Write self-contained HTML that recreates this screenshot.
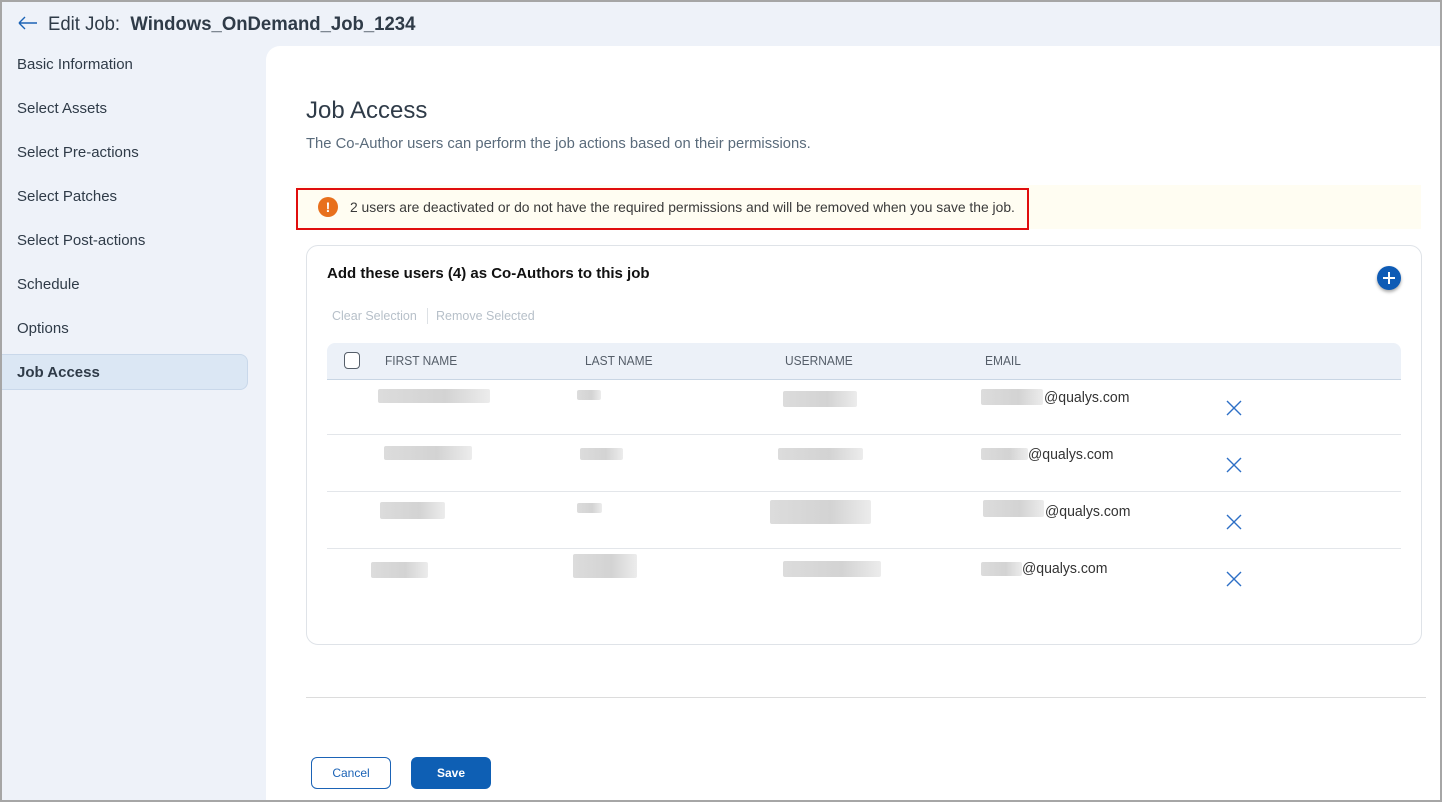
<!DOCTYPE html>
<html><head><meta charset="utf-8"><style>
*{box-sizing:border-box;margin:0;padding:0}
body{width:1442px;height:802px;overflow:hidden;font-family:"Liberation Sans",sans-serif;background:#eef2f9;position:relative;color:#333}
.frame{position:absolute;left:0;top:0;width:1442px;height:802px;border:2px solid #a6a6a6;pointer-events:none;z-index:10}
.a{position:absolute}
.nav{position:absolute;left:17px;font-size:15px;color:#2f3b48}
.panel{position:absolute;left:266px;top:46px;width:1174px;height:754px;background:#fff;border-top-left-radius:14px}
.blur{position:absolute;height:14px;background:linear-gradient(90deg,#dcdcdc,#d3d3d3 60%,#ececec);border-radius:2px}
.hd{position:absolute;top:353px;font-size:13px;color:#555e69;transform:scaleX(.92);transform-origin:left}
.row{position:absolute;left:327px;width:1074px;height:1px;background:#e3e6ea}
.em{position:absolute;font-size:14.5px;color:#333;transform:scaleX(.97);transform-origin:left}
.x{position:absolute;width:18px;height:18px}
</style></head><body>
<div class="frame"></div>
<svg class="a" style="left:18px;top:16px" width="20" height="14" viewBox="0 0 20 14"><path d="M1 7H19M1 7L7 1M1 7L7 13" stroke="#1b63b6" stroke-width="1.4" fill="none"/></svg>
<div class="a" style="left:48px;top:13px;font-size:19.5px;color:#2f3b48;transform:scaleX(.95);transform-origin:left">Edit Job:&nbsp; <b>Windows_OnDemand_Job_1234</b></div>
<div class="nav" style="top:56px">Basic Information</div>
<div class="nav" style="top:100px">Select Assets</div>
<div class="nav" style="top:144px">Select Pre-actions</div>
<div class="nav" style="top:188px">Select Patches</div>
<div class="nav" style="top:232px">Select Post-actions</div>
<div class="nav" style="top:276px">Schedule</div>
<div class="nav" style="top:320px">Options</div>
<div class="a" style="left:2px;top:354px;width:246px;height:36px;background:#dbe7f4;border:1px solid #c9d8ea;border-left:none;border-radius:0 8px 8px 0"></div>
<div class="nav" style="top:364px;font-weight:bold">Job Access</div>
<div class="panel"></div>
<div class="a" style="left:306px;top:97px;font-size:24px;color:#2f3b48">Job Access</div>
<div class="a" style="left:306px;top:136px;font-size:14.5px;color:#5a6b7b;transform:scaleX(1.02);transform-origin:left">The Co-Author users can perform the job actions based on their permissions.</div>
<div class="a" style="left:297px;top:185px;width:1124px;height:44px;background:#fffdf2"></div>
<div class="a" style="left:296px;top:188px;width:733px;height:42px;border:2px solid #e00d0d"></div>
<div class="a" style="left:318px;top:197px;width:20px;height:20px;border-radius:50%;background:#e8701c;color:#fff;font-size:14px;font-weight:bold;text-align:center;line-height:20px">!</div>
<div class="a" style="left:350px;top:199px;font-size:14px;color:#3a3a3a;transform:scaleX(.99);transform-origin:left">2 users are deactivated or do not have the required permissions and will be removed when you save the job.</div>
<div class="a" style="left:306px;top:245px;width:1116px;height:400px;border:1px solid #dfe3e8;border-radius:12px"></div>
<div class="a" style="left:327px;top:265px;font-size:15px;font-weight:bold;color:#111">Add these users (4) as Co-Authors to this job</div>
<div class="a" style="left:1377px;top:266px;width:24px;height:24px;border-radius:50%;background:#0e5bb5;box-shadow:0 2px 3px rgba(0,0,0,.35)"><svg width="24" height="24"><path d="M12 6V18M6 12H18" stroke="#fff" stroke-width="2"/></svg></div>
<div class="a" style="left:332px;top:309px;font-size:12.5px;color:#b7c0c9">Clear Selection</div>
<div class="a" style="left:427px;top:308px;width:1px;height:16px;background:#dde1e5"></div>
<div class="a" style="left:436px;top:309px;font-size:12.5px;color:#b7c0c9">Remove Selected</div>
<div class="a" style="left:327px;top:343px;width:1074px;height:37px;background:#ecf1f8;border-radius:8px 8px 0 0;border-bottom:1px solid #c9d6e4"></div>
<div class="a" style="left:344px;top:352px;width:16px;height:17px;border:1.5px solid #555e69;border-radius:4px;background:#fff"></div>
<div class="hd" style="left:385px">FIRST NAME</div>
<div class="hd" style="left:585px">LAST NAME</div>
<div class="hd" style="left:785px">USERNAME</div>
<div class="hd" style="left:985px">EMAIL</div>
<div class="row" style="top:434px"></div><div class="row" style="top:491px"></div><div class="row" style="top:548px"></div>
<div class="blur" style="left:378px;top:389px;width:112px"></div>
<div class="blur" style="left:577px;top:390px;width:24px;height:10px"></div>
<div class="blur" style="left:783px;top:391px;width:74px;height:16px"></div>
<div class="blur" style="left:981px;top:389px;width:62px;height:16px"></div>
<div class="em" style="left:1044px;top:390px">@qualys.com</div>
<div class="blur" style="left:384px;top:446px;width:88px"></div>
<div class="blur" style="left:580px;top:448px;width:43px;height:12px"></div>
<div class="blur" style="left:778px;top:448px;width:85px;height:12px"></div>
<div class="blur" style="left:981px;top:448px;width:47px;height:12px"></div>
<div class="em" style="left:1028px;top:447px">@qualys.com</div>
<div class="blur" style="left:380px;top:502px;width:65px;height:17px"></div>
<div class="blur" style="left:577px;top:503px;width:25px;height:10px"></div>
<div class="blur" style="left:770px;top:500px;width:101px;height:24px"></div>
<div class="blur" style="left:983px;top:500px;width:61px;height:17px"></div>
<div class="em" style="left:1045px;top:504px">@qualys.com</div>
<div class="blur" style="left:371px;top:562px;width:57px;height:16px"></div>
<div class="blur" style="left:573px;top:554px;width:64px;height:24px"></div>
<div class="blur" style="left:783px;top:561px;width:98px;height:16px"></div>
<div class="blur" style="left:981px;top:562px;width:41px;height:14px"></div>
<div class="em" style="left:1022px;top:561px">@qualys.com</div>
<svg class="x" style="left:1225px;top:399px"><path d="M2 2L16 16M16 2L2 16" stroke="#2d6fc6" stroke-width="1.4"/></svg>
<svg class="x" style="left:1225px;top:456px"><path d="M2 2L16 16M16 2L2 16" stroke="#2d6fc6" stroke-width="1.4"/></svg>
<svg class="x" style="left:1225px;top:513px"><path d="M2 2L16 16M16 2L2 16" stroke="#2d6fc6" stroke-width="1.4"/></svg>
<svg class="x" style="left:1225px;top:570px"><path d="M2 2L16 16M16 2L2 16" stroke="#2d6fc6" stroke-width="1.4"/></svg>
<div class="a" style="left:306px;top:697px;width:1120px;height:1px;background:#dcdcdc"></div>
<div class="a" style="left:311px;top:757px;width:80px;height:32px;border:1px solid #1b63b6;border-radius:6px;text-align:center;line-height:30px;font-size:12px;color:#1b63b6">Cancel</div>
<div class="a" style="left:411px;top:757px;width:80px;height:32px;background:#0e5fb4;border-radius:6px;text-align:center;line-height:32px;font-size:12px;color:#fff;font-weight:bold">Save</div>
</body></html>
